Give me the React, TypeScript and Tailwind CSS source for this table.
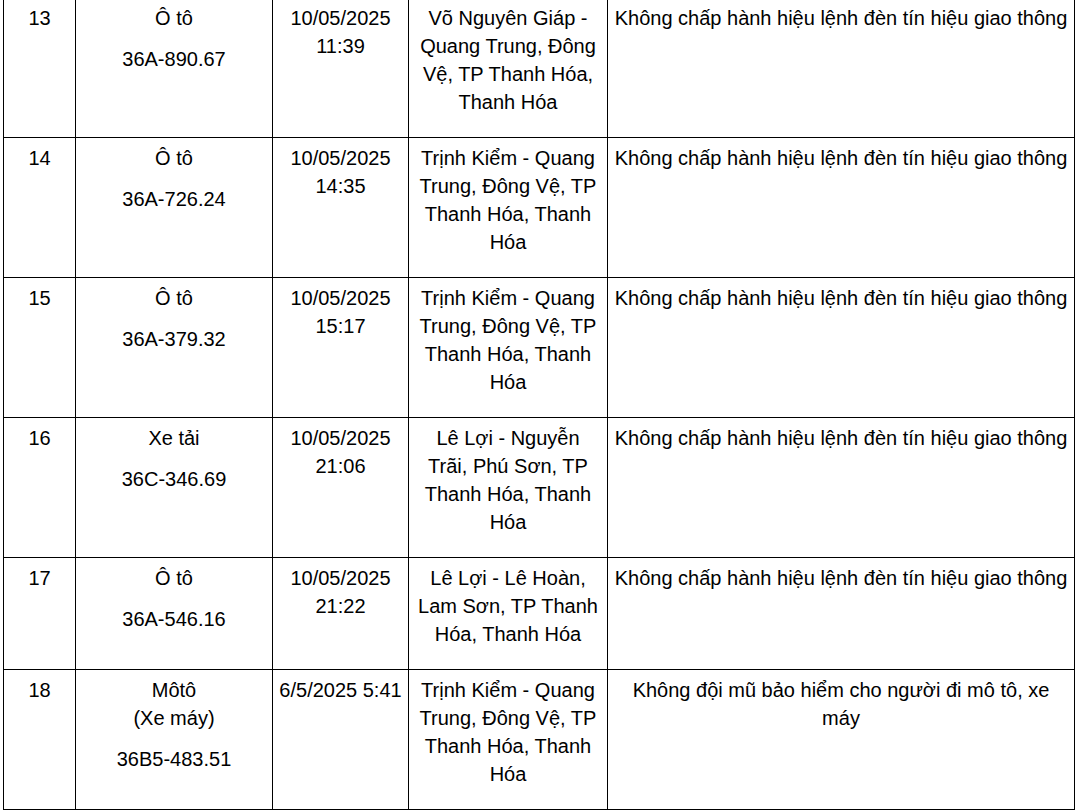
type Violation = {
  stt: string
  vehicle: string[][]
  time: string[]
  place: string[]
  offence: string[]
}

const rows: Violation[] = [
  {
    stt: '13',
    vehicle: [['Ô tô'], ['36A-890.67']],
    time: ['10/05/2025', '11:39'],
    place: ['Võ Nguyên Giáp -', 'Quang Trung, Đông', 'Vệ, TP Thanh Hóa,', 'Thanh Hóa'],
    offence: ['Không chấp hành hiệu lệnh đèn tín hiệu giao thông'],
  },
  {
    stt: '14',
    vehicle: [['Ô tô'], ['36A-726.24']],
    time: ['10/05/2025', '14:35'],
    place: ['Trịnh Kiểm - Quang', 'Trung, Đông Vệ, TP', 'Thanh Hóa, Thanh', 'Hóa'],
    offence: ['Không chấp hành hiệu lệnh đèn tín hiệu giao thông'],
  },
  {
    stt: '15',
    vehicle: [['Ô tô'], ['36A-379.32']],
    time: ['10/05/2025', '15:17'],
    place: ['Trịnh Kiểm - Quang', 'Trung, Đông Vệ, TP', 'Thanh Hóa, Thanh', 'Hóa'],
    offence: ['Không chấp hành hiệu lệnh đèn tín hiệu giao thông'],
  },
  {
    stt: '16',
    vehicle: [['Xe tải'], ['36C-346.69']],
    time: ['10/05/2025', '21:06'],
    place: ['Lê Lợi - Nguyễn', 'Trãi, Phú Sơn, TP', 'Thanh Hóa, Thanh', 'Hóa'],
    offence: ['Không chấp hành hiệu lệnh đèn tín hiệu giao thông'],
  },
  {
    stt: '17',
    vehicle: [['Ô tô'], ['36A-546.16']],
    time: ['10/05/2025', '21:22'],
    place: ['Lê Lợi - Lê Hoàn,', 'Lam Sơn, TP Thanh', 'Hóa, Thanh Hóa'],
    offence: ['Không chấp hành hiệu lệnh đèn tín hiệu giao thông'],
  },
  {
    stt: '18',
    vehicle: [['Môtô', '(Xe máy)'], ['36B5-483.51']],
    time: ['6/5/2025 5:41'],
    place: ['Trịnh Kiểm - Quang', 'Trung, Đông Vệ, TP', 'Thanh Hóa, Thanh', 'Hóa'],
    offence: ['Không đội mũ bảo hiểm cho người đi mô tô, xe', 'máy'],
  },
]

function Lines({ lines }: { lines: string[] }) {
  return (
    <p className="mb-[13px] whitespace-nowrap">
      {lines.map((l, i) => (
        <span key={i}>
          {i > 0 && <br />}
          {l}
        </span>
      ))}
    </p>
  )
}

const cell = 'border border-black align-top text-center px-[5px] pt-[6px] pb-[8px]'

export default function App() {
  return (
    <div className="bg-white w-[1080px] h-[810px] overflow-hidden">
      <table
        className="ml-[3px] -mt-[3px] border-collapse table-fixed w-[1072px] text-black text-[20px] leading-[28px]"
        style={{ fontFamily: '"Liberation Sans", Arial, sans-serif' }}
      >
        <colgroup>
          <col className="w-[72px]" />
          <col className="w-[197px]" />
          <col className="w-[136px]" />
          <col className="w-[199px]" />
          <col />
        </colgroup>
        <tbody>
          {rows.map((r) => (
            <tr key={r.stt}>
              <td className={cell}>
                <Lines lines={[r.stt]} />
              </td>
              <td className={cell}>
                {r.vehicle.map((p, i) => (
                  <Lines key={i} lines={p} />
                ))}
              </td>
              <td className={cell}>
                <Lines lines={r.time} />
              </td>
              <td className={cell}>
                <Lines lines={r.place} />
              </td>
              <td className={cell}>
                <Lines lines={r.offence} />
              </td>
            </tr>
          ))}
        </tbody>
      </table>
    </div>
  )
}
